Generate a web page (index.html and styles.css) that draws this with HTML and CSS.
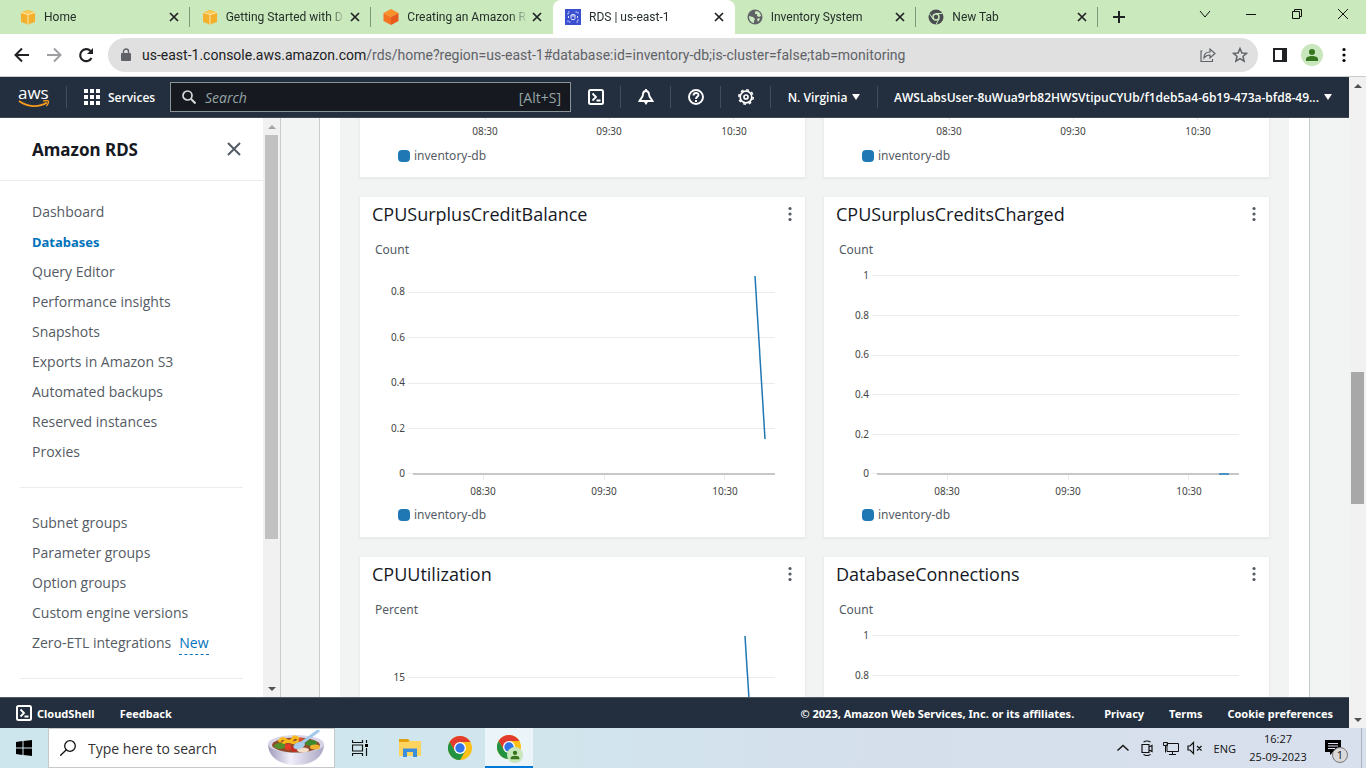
FILE: index.html
```html
<!DOCTYPE html>
<html lang="en">
<head>
<meta charset="utf-8">
<title>RDS | us-east-1</title>
<link rel="stylesheet" href="styles.css">
</head>
<body>
<svg class="defs" aria-hidden="true">
  <defs>
    <symbol id="cube" viewBox="0 0 16 16"><path fill="#f3b02c" d="M1 3.5 8 1l7 2.500v9.500L8 15.500 1 13z"/><path fill="#f9c84f" d="M1 3.500 8 1l7 2.500L8 5.500z"/><path fill="none" stroke="#fce6ac" d="M1 3.500 8 5.500l7-2M8 5.500V15"/></symbol>
    <symbol id="close" viewBox="0 0 10 10"><path d="m1 1 8 8M9 1 1 9" fill="none" stroke="currentColor" stroke-width="1.700"/></symbol>
    <symbol id="dots" viewBox="0 0 4 16"><circle cx="2" cy="2.500" r="1.600"/><circle cx="2" cy="8" r="1.600"/><circle cx="2" cy="13.500" r="1.600"/></symbol>
    <symbol id="shell" viewBox="0 0 16 16"><rect x="1" y="1" width="14" height="14" rx="1.500" fill="none" stroke="currentColor" stroke-width="2"/><path d="m4.500 4.500 3.500 3.500-3.500 3.500M8.500 11.500h4" fill="none" stroke="currentColor" stroke-width="1.800"/></symbol>
    <symbol id="person" viewBox="0 0 22 22"><circle cx="11" cy="11" r="11" fill="#c8e7bc"/><circle cx="11" cy="8" r="3" fill="#38761d"/><path fill="#38761d" d="M5 17v-2c0-2 3-3 6-3s6 1 6 3v2z"/></symbol>
    <symbol id="chrome" viewBox="0 0 24 24"><circle cx="12" cy="12" r="12" fill="#fbc116"/><path fill="#e33b2e" d="M1.600 6A12 12 0 0 1 22.400 6H12L6.800 15z"/><path fill="#229342" d="M1.600 6a12 12 0 0 0 10.400 18l5.200-9L12 12l-5.200 3z"/><circle cx="12" cy="12" r="6" fill="#fff"/><circle cx="12" cy="12" r="4.700" fill="#3074e8"/></symbol>
    <symbol id="up" viewBox="0 0 8 4"><path d="M0 4 4 0l4 4z"/></symbol>
    <symbol id="down" viewBox="0 0 8 4" preserveAspectRatio="none"><path d="m0 0 4 4 4-4z"/></symbol>
  </defs>
</svg>

<header class="browser">
  <div class="tabstrip">
    <div class="tabs">
      <div class="tab"><svg class="favicon"><use href="#cube"/></svg><span class="tab-title">Home</span><button class="tab-close" aria-label="Close tab"><svg><use href="#close"/></svg></button></div>
      <div class="tab"><svg class="favicon"><use href="#cube"/></svg><span class="tab-title">Getting Started with D</span><button class="tab-close" aria-label="Close tab"><svg><use href="#close"/></svg></button></div>
      <div class="tab before-active"><svg class="favicon" viewBox="0 0 16 16"><path fill="#f8912a" d="m8 0 7.500 4L8 8 .5 4z"/><path fill="#f37321" d="M.5 4 8 8v8L.5 12z"/><path fill="#e8591c" d="M15.500 4 8 8v8l7.500-4z"/></svg><span class="tab-title">Creating an Amazon R</span><button class="tab-close" aria-label="Close tab"><svg><use href="#close"/></svg></button></div>
      <div class="tab active"><svg class="favicon" viewBox="0 0 16 16"><path fill="#3b4fd1" d="M0 0h16v16H0z"/><g fill="none" stroke="#dfe3ff"><path d="M3 5.500V3h2.500M10.500 3H13v2.500M13 10.500V13h-2.500M5.500 13H3v-2.500" stroke-dasharray="1.500 1"/><path d="M4 7 3 8l1 1M12 7l1 1-1 1"/><ellipse cx="8" cy="6.200" rx="2" ry=".8"/><path d="M6 6.200v3.600c0 1.100 4 1.100 4 0V6.200"/></g></svg><span class="tab-title">RDS | us-east-1</span><button class="tab-close" aria-label="Close tab"><svg><use href="#close"/></svg></button></div>
      <div class="tab"><svg class="favicon" viewBox="0 0 16 16"><circle cx="8" cy="8" r="7.500" fill="#5f6368"/><path fill="#cae9bd" d="M9 2c3 0 5 3 5 5l-2 1-2-1V5H8V3zM2 7l4 1 2 2-1 2v2c-3 0-5-3-5-7zM10 10l2-1 1 1-2 3z"/></svg><span class="tab-title">Inventory System</span><button class="tab-close" aria-label="Close tab"><svg><use href="#close"/></svg></button></div>
      <div class="tab"><svg class="favicon" viewBox="0 0 16 16"><circle cx="8" cy="8" r="7.500" fill="#494c50"/><circle cx="8" cy="8" r="3" fill="#494c50" stroke="#cae9bd" stroke-width="1.500"/><path stroke="#cae9bd" d="M8 4.500h6.500M5 10 1.500 4.500M11 10l-3 5.500"/></svg><span class="tab-title">New Tab</span><button class="tab-close" aria-label="Close tab"><svg><use href="#close"/></svg></button></div>
    </div>
    <button class="new-tab" aria-label="New tab"><svg viewBox="0 0 12 12"><path d="M6 0v12M0 6h12" stroke="#202124" stroke-width="2"/></svg></button>
    <div class="window-buttons">
      <button aria-label="Search tabs"><svg viewBox="0 0 12 12"><path d="m1 3 5 6 5-6"/></svg></button>
      <button aria-label="Minimize"><svg viewBox="0 0 12 12"><path d="M1 6.500h10"/></svg></button>
      <button aria-label="Restore"><svg viewBox="0 0 12 12"><path d="M1.500 3.500h7v7h-7zM3.500 3.500v-2h7v7h-2"/></svg></button>
      <button aria-label="Close window"><svg viewBox="0 0 12 12"><path d="m1 1 10 10M11 1 1 11"/></svg></button>
    </div>
  </div>
  <div class="toolbar">
    <button class="nav-button" aria-label="Back"><svg viewBox="0 0 16 16"><path d="M15 8H2M8 1.500 1.500 8 8 14.500" fill="none" stroke="#202124" stroke-width="2"/></svg></button>
    <button class="nav-button" aria-label="Forward"><svg viewBox="0 0 16 16"><path d="M1 8h13M8 1.500 14.500 8 8 14.500" fill="none" stroke="#9c9ea1" stroke-width="2"/></svg></button>
    <button class="nav-button" aria-label="Reload"><svg viewBox="0 0 16 16"><path d="M13.500 11A6 6 0 1 1 12.500 4" fill="none" stroke="#202124" stroke-width="2.200"/><path fill="#202124" d="M15 1v6H9z"/></svg></button>
    <div class="omnibox">
      <svg class="lock" viewBox="0 0 10 14"><path fill="#5f6368" d="M1 5h8a1 1 0 0 1 1 1v6a1 1 0 0 1-1 1H1a1 1 0 0 1-1-1V6a1 1 0 0 1 1-1z"/><path d="M2.500 6V3.500a2.500 2.500 0 0 1 5 0V6" fill="none" stroke="#5f6368" stroke-width="1.400"/></svg>
      <span class="url"><b>us-east-1.console.aws.amazon.com</b>/rds/home?region=us-east-1#database:id=inventory-db;is-cluster=false;tab=monitoring</span>
      <button aria-label="Share"><svg viewBox="0 0 16 16"><path d="M2.500 4H1v10.500h11.500V12M4 11c0-4 2-6 6-6V2l5 4.500L10 11V8c-3 0-4.500 1-6 3z" fill="none" stroke="#5f6368" stroke-width="1.200"/></svg></button>
      <button aria-label="Bookmark"><svg viewBox="0 0 16 16"><path d="m8 1.500 1.900 4.500 4.600.3-3.500 3.100 1.100 4.800L8 11.700l-4.100 2.500L5 9.400 1.500 6.300 6.100 6z" fill="none" stroke="#5f6368" stroke-width="1.500"/></svg></button>
    </div>
    <button class="nav-button" aria-label="Side panel"><svg viewBox="0 0 16 16"><path d="M2 2h12v12H2z" fill="none" stroke="#202124" stroke-width="2"/><path fill="#202124" d="M10 2h4v12h-4z"/></svg></button>
    <button class="nav-button profile" aria-label="Profile"><svg><use href="#person"/></svg></button>
    <button class="nav-button" aria-label="Menu"><svg><use href="#dots"/></svg></button>
  </div>
</header>

<div class="viewport">
  <div class="page">
    <nav class="aws-bar">
      <a class="logo" href="#" aria-label="AWS"><span class="logo-text">aws</span><svg viewBox="0 0 32 8"><path d="M1 1c9 6.500 20 6.500 28 1.500" fill="none" stroke="#f79b1e" stroke-width="1.800"/><path d="M25 1.200c3-.8 5-.6 5.400 0 .3.800-.4 3.200-2 4.800" fill="none" stroke="#f79b1e" stroke-width="1.300"/></svg></a>
      <button class="services"><svg viewBox="0 0 16 16"><path fill="#fff" d="M0 0h4v4H0zM6 0h4v4H6zM12 0h4v4h-4zM0 6h4v4H0zM6 6h4v4H6zM12 6h4v4h-4zM0 12h4v4H0zM6 12h4v4H6zM12 12h4v4h-4z"/></svg>Services</button>
      <label class="search"><svg viewBox="0 0 14 14"><circle cx="5.500" cy="5.500" r="4.500" fill="none" stroke="#d5dbdb" stroke-width="1.700"/><path d="m9 9 4.500 4.500" stroke="#d5dbdb" stroke-width="2"/></svg><input type="text" placeholder="Search" aria-label="Search"><span>[Alt+S]</span></label>
      <button class="tool" aria-label="CloudShell"><svg><use href="#shell"/></svg></button>
      <button class="tool" aria-label="Notifications"><svg viewBox="0 0 16 16"><path d="M8 2C6 2 5 3.500 5 5.500 5 8 2.500 10 1.500 12h13C13.500 10 11 8 11 5.500 11 3.500 10 2 8 2zM8 0v2" fill="none" stroke="#fff" stroke-width="1.900"/><path fill="#fff" d="M6 13h4l-2 3z"/></svg></button>
      <button class="tool" aria-label="Help"><svg viewBox="0 0 16 16"><g fill="none" stroke="#fff" stroke-width="1.900"><circle cx="8" cy="8" r="7"/><path d="M5.500 6.500C5.500 3.200 10.500 3.300 10.500 6 10.500 7.800 8 7.500 8 10"/></g><path fill="#fff" d="M7 11h2v2H7z"/></svg></button>
      <button class="tool" aria-label="Settings"><svg viewBox="0 0 16 16"><g fill="none" stroke="#fff"><circle cx="8" cy="8" r="5.800" stroke-width="1.700"/><circle cx="8" cy="8" r="7.200" stroke-width="1.600" stroke-dasharray="2.800 2.850"/><circle cx="8" cy="8" r="2" stroke-width="1.700"/></g></svg></button>
      <button class="region">N. Virginia<svg><use href="#down"/></svg></button>
      <button class="account"><span>AWSLabsUser-8uWua9rb82HWSVtipuCYUb/f1deb5a4-6b19-473a-bfd8-49...</span><svg><use href="#down"/></svg></button>
    </nav>

    <div class="main">
      <aside class="sidebar">
        <div class="side-head"><h2>Amazon RDS</h2><button aria-label="Close navigation"><svg viewBox="0 0 14 14"><path d="m1 1 12 12M13 1 1 13" stroke="#545b64" stroke-width="2"/></svg></button></div>
        <ul>
          <li><a href="#">Dashboard</a></li>
          <li><a class="current" href="#">Databases</a></li>
          <li><a href="#">Query Editor</a></li>
          <li><a href="#">Performance insights</a></li>
          <li><a href="#">Snapshots</a></li>
          <li><a href="#">Exports in Amazon S3</a></li>
          <li><a href="#">Automated backups</a></li>
          <li><a href="#">Reserved instances</a></li>
          <li><a href="#">Proxies</a></li>
        </ul>
        <ul>
          <li><a href="#">Subnet groups</a></li>
          <li><a href="#">Parameter groups</a></li>
          <li><a href="#">Option groups</a></li>
          <li><a href="#">Custom engine versions</a></li>
          <li><a href="#">Zero-ETL integrations</a><a class="new" href="#">New</a></li>
        </ul>
        <hr>
      </aside>
      <div class="scrollbar side-scroll"><span class="arrow faint"><svg><use href="#up"/></svg></span><span class="thumb"></span><span class="after"></span><span class="arrow"><svg><use href="#down"/></svg></span></div>

      <main class="content">
        <div class="board">
          <section class="card">
            <svg class="chart" viewBox="0 0 445 24"><path class="grid" d="M125.500 0v2M249.500 0v2M373.500 0v2"/><g class="time"><text x="125" y="17">08:30</text><text x="249" y="17">09:30</text><text x="374" y="17">10:30</text></g></svg>
            <p class="legend">inventory-db</p>
          </section>
          <section class="card">
            <svg class="chart" viewBox="0 0 445 24"><path class="grid" d="M125.500 0v2M249.500 0v2M373.500 0v2"/><g class="time"><text x="125" y="17">08:30</text><text x="249" y="17">09:30</text><text x="374" y="17">10:30</text></g></svg>
            <p class="legend">inventory-db</p>
          </section>

          <section class="card">
            <div class="card-head"><h3>CPUSurplusCreditBalance</h3><button aria-label="Widget actions"><svg><use href="#dots"/></svg></button></div>
            <svg class="chart" viewBox="0 0 445 270">
              <text class="unit" x="15" y="23">Count</text>
              <path class="grid" d="M48 61.500h367M48 106.500h367M48 152.500h367M48 197.500h367M48 242.500h5M123.500 244v5M244.500 244v5M364.500 244v5"/>
              <path class="axis" d="M53 243h362"/>
              <g class="value"><text x="45" y="64">0.8</text><text x="45" y="110">0.6</text><text x="45" y="155">0.4</text><text x="45" y="201">0.2</text><text x="45" y="246">0</text></g>
              <g class="time"><text x="123" y="264">08:30</text><text x="244" y="264">09:30</text><text x="365" y="264">10:30</text></g>
              <path class="series" d="m395 45 10 163"/>
            </svg>
            <p class="legend">inventory-db</p>
          </section>
          <section class="card">
            <div class="card-head"><h3>CPUSurplusCreditsCharged</h3><button aria-label="Widget actions"><svg><use href="#dots"/></svg></button></div>
            <svg class="chart" viewBox="0 0 445 270">
              <text class="unit" x="15" y="23">Count</text>
              <path class="grid" d="M48 44.500h367M48 84.500h367M48 124.500h367M48 163.500h367M48 203.500h367M48 242.500h5M123.500 244v5M244.500 244v5M364.500 244v5"/>
              <path class="axis" d="M53 243h362"/>
              <g class="value"><text x="45" y="48">1</text><text x="45" y="88">0.8</text><text x="45" y="127">0.6</text><text x="45" y="167">0.4</text><text x="45" y="207">0.2</text><text x="45" y="246">0</text></g>
              <g class="time"><text x="123" y="264">08:30</text><text x="244" y="264">09:30</text><text x="365" y="264">10:30</text></g>
              <path class="axis zero" d="M395 243h10"/>
            </svg>
            <p class="legend">inventory-db</p>
          </section>

          <section class="card">
            <div class="card-head"><h3>CPUUtilization</h3><button aria-label="Widget actions"><svg><use href="#dots"/></svg></button></div>
            <svg class="chart" viewBox="0 0 445 106">
              <text class="unit" x="15" y="23">Percent</text>
              <path class="grid" d="M48 86.500h367"/>
              <g class="value"><text x="45" y="90">15</text></g>
              <path class="series" d="m385 45 4 63"/>
            </svg>
          </section>
          <section class="card">
            <div class="card-head"><h3>DatabaseConnections</h3><button aria-label="Widget actions"><svg><use href="#dots"/></svg></button></div>
            <svg class="chart" viewBox="0 0 445 106">
              <text class="unit" x="15" y="23">Count</text>
              <path class="grid" d="M48 44.500h367M48 84.500h367"/>
              <g class="value"><text x="45" y="48">1</text><text x="45" y="88">0.8</text></g>
            </svg>
          </section>
        </div>
      </main>
    </div>

    <footer class="aws-foot">
      <button><svg><use href="#shell"/></svg>CloudShell</button>
      <a class="feedback" href="#">Feedback</a>
      <span class="copyright">© 2023, Amazon Web Services, Inc. or its affiliates.</span>
      <a class="privacy" href="#">Privacy</a>
      <a href="#">Terms</a>
      <a href="#">Cookie preferences</a>
    </footer>
  </div>
  <div class="scrollbar page-scroll"><span class="arrow"><svg><use href="#up"/></svg></span><span class="before"></span><span class="thumb"></span><span class="after"></span><span class="arrow"><svg><use href="#down"/></svg></span></div>
</div>

<div class="taskbar">
  <button class="start" aria-label="Start"><svg viewBox="0 0 16 16"><path d="m0 2 6.500-1v6.500H0zM7.500 1 16 0v7.500H7.500zM0 8.500h6.500V15L0 14zM7.500 8.500H16V16l-8.500-1z"/></svg></button>
  <label class="task-search">
    <svg class="lens" viewBox="0 0 16 16"><circle cx="10" cy="6" r="5.300" fill="none" stroke="#111" stroke-width="1.300"/><path d="m6.300 9.700-6 6" stroke="#111" stroke-width="1.300"/></svg>
    <input type="text" placeholder="Type here to search" aria-label="Type here to search">
    <svg class="bowl" viewBox="0 0 56 36"><defs><linearGradient id="bw" x1="0" x2="1"><stop stop-color="#9c98b8"/><stop offset=".4" stop-color="#f1effa"/><stop offset="1" stop-color="#aaa6c4"/></linearGradient></defs><path fill="url(#bw)" d="M0 14c0 12 10 21 28 21s28-9 28-21z"/><ellipse cx="28" cy="14" rx="28" ry="9" fill="#d8d5e8"/><ellipse cx="28" cy="15" rx="24" ry="7.500" fill="#8f4c2b"/><path d="M11 12q3-6 7-2t8-3q4 0 6 4M14 14q5-4 9-2t8-2" fill="none" stroke="#f8b91c" stroke-width="3"/><ellipse cx="12" cy="16" rx="6" ry="3" fill="#56902c"/><ellipse cx="43" cy="13" rx="6" ry="3" fill="#3e8a31"/><ellipse cx="47" cy="17" rx="5" ry="2.500" fill="#efb330"/><circle cx="20" cy="17" r="3.200" fill="#e43b28"/><circle cx="26" cy="19" r="3" fill="#c92c23"/><circle cx="33" cy="10" r="2.500" fill="#df4d2c"/><ellipse cx="35" cy="20" rx="6" ry="2.500" fill="#f4ddc8"/><ellipse cx="31" cy="15.500" rx="6" ry="3.500" fill="#a8ccea" transform="rotate(-20 31 15)"/><path d="m35 12 15-11" stroke="#a6caea" stroke-width="3.200" stroke-linecap="round"/></svg>
  </label>
  <button class="app" aria-label="Task view"><svg class="view" viewBox="0 0 16 16"><path d="M.5 0v2.500h10V0M.5 16v-2.500h10V16M.5 5h10v6H.5zM14.500 0v3M14.500 8v8" fill="none" stroke="#111" stroke-width="1.200"/><path d="M13 4h3v3h-3z"/></svg></button>
  <button class="app" aria-label="File Explorer"><svg class="folder" viewBox="0 0 22 20"><path fill="#e2a20f" d="M0 1h9l2 2v4H0z"/><path fill="#fdd45f" d="M0 4h9l1-1h12v15H0z"/><path fill="#3a8edb" d="M4 10.500h14V19h-4v-5H8v5H4z"/></svg></button>
  <button class="app" aria-label="Chrome"><svg><use href="#chrome"/></svg></button>
  <button class="app running" aria-label="Chrome window"><svg><use href="#chrome"/></svg><svg class="badge"><use href="#person"/></svg></button>
  <div class="tray">
    <svg viewBox="0 0 16 16"><path d="m2.500 10.500 5.500-5 5.500 5" fill="none" stroke="#111" stroke-width="1.400"/></svg>
    <svg viewBox="0 0 16 16"><path d="M3 4.500h7v8H3zM10 7l3-1.500v6L10 10M4.500 2q3.500-2 7 0M4.500 14.500q3.500 2 7 0" fill="none" stroke="#111" stroke-width="1.200"/></svg>
    <svg viewBox="0 0 16 16"><path d="M4 3.500h11.500v8H4zM9.500 11.500v3M6 14.500h7M.5 2.500h4v3h-4zM2.500 5.500v7" fill="none" stroke="#111"/></svg>
    <svg viewBox="0 0 16 16"><path d="M1 6h2l3.500-3.500v11L3 10H1zM10 6l4.500 4.500M14.500 6 10 10.500" fill="none" stroke="#111" stroke-width="1.200"/></svg>
    <span class="lang">ENG</span>
    <span class="clock">16:27<br>25-09-2023</span>
    <button class="notices" aria-label="Notifications"><svg viewBox="0 0 16 16"><path d="M0 0h16v12H8l-3 3v-3H0z"/><path d="M3 3.500h10M3 6h10M3 8.500h7" stroke="#dbe2ee"/></svg><span>1</span></button>
  </div>
</div>
</body>
</html>
```
FILE: styles.css
```css
* { box-sizing: border-box; }

body {
  margin: 0;
  height: 100vh;
  display: flex;
  flex-direction: column;
  overflow: hidden;
  font-family: "Noto Sans", "Open Sans", sans-serif;
  font-size: 13px;
  color: #16191f;
}

button, input { font: inherit; color: inherit; background: none; border: 0; padding: 0; margin: 0; }
button { display: inline-flex; align-items: center; justify-content: center; }
input { outline: 0; min-width: 0; }
a { color: inherit; text-decoration: none; }
h2, h3, p, ul { margin: 0; padding: 0; font-weight: 400; list-style: none; }
svg { flex: none; width: 16px; height: 16px; }
.defs { position: absolute; width: 0; height: 0; }

/* Browser frame */
.browser { flex: none; border-bottom: 1px solid #c9cbcc; font-family: Roboto, "Open Sans", sans-serif; }
.tabstrip { display: flex; height: 34px; padding-left: 8px; background: #cae9bd; }
.tabs { display: flex; flex: 0 1 1090px; }
.tab {
  flex: 1 1 0;
  min-width: 0;
  display: flex;
  align-items: center;
  padding: 0 11px 0 12px;
  background: linear-gradient(#7f9878, #7f9878) right 7px / 1px 20px no-repeat;
}
.tab.before-active { background: none; }
.tab.active { background: #fff; border-radius: 8px 8px 0 0; }
.tab-title {
  flex: 1;
  margin: 0 4px 0 8px;
  overflow: hidden;
  white-space: nowrap;
  font-size: 12px;
  color: #25302a;
  mask-image: linear-gradient(to right, #000 85%, transparent);
}
.tab-close svg { width: 10px; height: 10px; color: #202124; }
.new-tab { width: 40px; margin-left: 1px; }
.new-tab svg { width: 12px; height: 12px; }
.window-buttons { display: flex; height: 28px; margin-left: auto; }
.window-buttons button { width: 46px; }
.window-buttons svg { width: 12px; height: 12px; fill: none; stroke: #111; }

.toolbar { display: flex; align-items: center; height: 42px; padding: 0 6px; background: #fff; }
.nav-button { width: 32px; height: 32px; }
.profile svg { width: 22px; height: 22px; }
.omnibox {
  flex: 1;
  min-width: 0;
  display: flex;
  align-items: center;
  height: 34px;
  margin: 0 6px;
  padding: 0 2px 0 13px;
  border-radius: 17px;
  background: #e0e0e0;
  color: #5f6368;
  font-size: 14px;
}
.omnibox b { font-weight: 400; color: #202124; }
.omnibox button { width: 32px; height: 32px; }
.lock { width: 10px; height: 14px; margin-right: 11px; }
.url { flex: 1; min-width: 0; overflow: hidden; white-space: nowrap; }

/* Page shell */
.viewport { flex: 1; min-height: 0; display: flex; }
.page { flex: 1; min-width: 0; display: flex; flex-direction: column; }
.aws-bar {
  flex: none;
  display: flex;
  align-items: center;
  height: 41px;
  background: #232f3e;
  border-bottom: 1px solid #414750;
  color: #fff;
  font-family: "Open Sans", "Noto Sans", sans-serif;
  font-size: 12px;
  font-weight: 600;
}
.aws-bar > * { flex: none; }
.logo {
  width: 67px;
  padding-left: 18px;
  display: flex;
  flex-direction: column;
  border-right: 1px solid #414d5c;
}
.logo-text { font-size: 17px; line-height: 14px; font-weight: 500; }
.logo svg { width: 32px; height: 8px; }
.services { gap: 8px; width: 103px; padding-left: 17px; justify-content: flex-start; }
.aws-bar .search {
  flex: 0 1 401px;
  min-width: 0;
  display: flex;
  align-items: center;
  height: 30px;
  padding: 0 9px 0 11px;
  background: #16191f;
  border: 1px solid #879596;
  color: #95a5a6;
  font-size: 14px;
  font-weight: 400;
}
.search svg { width: 14px; height: 14px; margin-right: 9px; }
.search input { flex: 1; font-style: italic; }
.search input::placeholder { color: #95a5a6; }
.tool { width: 50px; height: 22px; border-right: 1px solid #414d5c; }
.region { gap: 5px; width: 107px; height: 22px; border-right: 1px solid #414d5c; }
.region svg, .account svg { width: 8px; height: 6px; fill: #fff; }
.account { gap: 5px; padding: 0 16px; }

.main { flex: 1; min-height: 0; display: flex; overflow: hidden; background: #f2f3f3; }
.sidebar {
  flex: none;
  width: 263px;
  overflow: hidden;
  background: #fff;
  color: #545b64;
  font-family: "Open Sans", "Noto Sans", sans-serif;
  font-size: 14px;
}
.side-head {
  display: flex;
  align-items: center;
  justify-content: space-between;
  height: 63px;
  padding: 0 22px 0 32px;
  border-bottom: 1px solid #eaeded;
}
.side-head h2 { font: 700 17px "Noto Sans", sans-serif; color: #16191f; }
.side-head svg { width: 14px; height: 14px; }
.sidebar ul { padding: 16px 32px 20px; line-height: 30px; }
.sidebar ul + ul, .sidebar hr { margin: 0 20px; border: 0; border-top: 1px solid #eaeded; }
.sidebar ul + ul { padding: 20px 12px; }
.sidebar li { display: flex; align-items: center; height: 30px; white-space: nowrap; }
.sidebar .current { font-family: "Noto Sans", sans-serif; font-size: 13px; font-weight: 700; color: #0073bb; }
.new { margin-left: 8px; line-height: 22px; color: #0073bb; border-bottom: 1px dashed #0073bb; }

.scrollbar { flex: none; width: 17px; display: flex; flex-direction: column; align-items: center; background: #f1f1f1; }
.arrow { height: 17px; display: flex; align-items: center; }
.arrow svg { width: 8px; height: 4px; fill: #505050; }
.arrow.faint svg { fill: #a3a3a3; }
.thumb { width: 13px; background: #c1c1c1; }
.side-scroll .thumb { flex: 404; }
.side-scroll .after { flex: 141; }
.page-scroll .before { flex: 278; }
.page-scroll .thumb { flex: 132; background: #a8a8a8; }
.page-scroll .after { flex: 207; }

/* Metric board */
.content { flex: 1; min-width: 0; padding: 0 40px 0 39px; border-left: 1px solid #c6cbcc; }
.board {
  display: grid;
  grid-template-columns: 1fr 1fr;
  gap: 20px 19px;
  min-height: 100%;
  padding: 0 20px;
  background: #f2f3f3;
  border: solid #fff;
  border-width: 0 20px;
  outline: 1px solid #c6cbcc;
}
.card { background: #fff; box-shadow: 0 1px 2px 1px #e8eaea; }
.card-head { display: flex; align-items: center; justify-content: space-between; height: 34px; padding: 0 13px 0 12px; }
.card-head h3 { font: 400 18px/24px "Open Sans", "Noto Sans", sans-serif; }
.card-head svg { width: 4px; height: 16px; fill: #545b64; }
.chart { display: block; width: 100%; height: auto; }
.grid { fill: none; stroke: #ebebeb; }
.axis { fill: none; stroke: #c7c7c7; stroke-width: 2; }
.axis.zero { stroke: #4d91c1; }
.series { fill: none; stroke: #1f77b4; stroke-width: 1.500; }
.unit { font-size: 12px; fill: #545b64; }
.value, .time { font-size: 10px; fill: #444; }
.value { text-anchor: end; }
.time { text-anchor: middle; }
.legend { display: flex; align-items: center; gap: 4px; height: 27px; padding-left: 38px; margin-bottom: 8px; font-size: 12px; color: #545b64; }
.legend::before { content: ""; width: 12px; height: 12px; border-radius: 4px; background: #1f77b4; }

.aws-foot {
  flex: none;
  display: flex;
  align-items: center;
  gap: 25px;
  height: 31px;
  padding: 0 16px;
  background: #232f3e;
  border-top: 1px solid #545b64;
  color: #fff;
  font-size: 11px;
  font-weight: 700;
  white-space: nowrap;
}
.aws-foot button { gap: 5px; }
.copyright { margin-left: auto; }
.privacy { margin-left: 5px; }

/* Windows taskbar */
.taskbar {
  flex: none;
  display: flex;
  height: 40px;
  background: linear-gradient(to right, #cde6ed, #d1e5ed 40%, #d5dfec 65%, #d9e0ed);
  font-family: "Open Sans", "Noto Sans", sans-serif;
}
.start { width: 48px; }
.task-search { display: flex; align-items: center; width: 287px; padding: 0 10px 0 11px; background: #fff; border: 1px solid #c3c8cb; font-size: 14px; }
.task-search input { flex: 1; margin-left: 12px; }
.task-search input::placeholder { color: #333; }
.bowl { width: 56px; height: 36px; }
.app { position: relative; width: 50px; }
.app svg { width: 24px; height: 24px; }
.app .view { width: 16px; height: 16px; }
.app .folder { width: 22px; height: 20px; }
.app.running { width: 48px; background: #ebf4f9; border-bottom: 2px solid #0078d7; }
.app .badge { position: absolute; right: 10px; bottom: 3px; width: 16px; height: 16px; }
.tray { display: flex; align-items: center; gap: 8px; margin-left: auto; font-size: 11px; color: #111; }
.lang { margin-left: 3px; }
.clock { width: 68px; line-height: 18px; text-align: center; }
.notices { position: relative; width: 42px; height: 40px; padding-right: 16px; border-right: 1px solid #a9b2bd; margin-right: 4px; }
.notices span { position: absolute; left: 12px; top: 19px; width: 16px; height: 16px; border: 1px solid #777; border-radius: 8px; background: #d9d9d9; font-size: 11px; line-height: 14px; }
```
